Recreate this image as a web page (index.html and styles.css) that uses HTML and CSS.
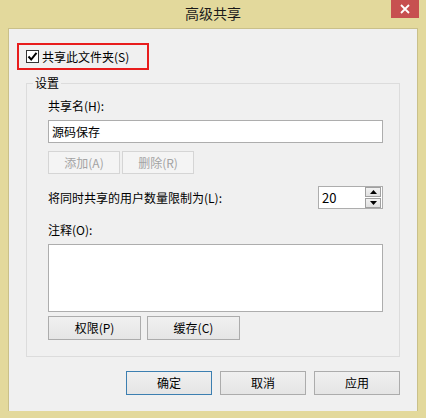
FILE: index.html
```html
<!DOCTYPE html>
<html>
<head>
    <title>高级共享</title>
    <meta charset="utf-8">
    <link rel="stylesheet" href="styles.css">
</head>
<body>
    <div class="window">
        <div class="titlebar">
            <span class="title">高级共享</span>
            <button class="close" aria-label="关闭">
                <svg width="10" height="10" viewBox="0 0 10 10"><path d="M1 1L9 9M9 1L1 9" stroke="#fff" stroke-width="1.8"/></svg>
            </button>
        </div>

        <div class="client">
            <label class="share-check">
                <span class="checkbox">
                    <svg width="11" height="11" viewBox="0 0 11 11"><path d="M1.5 5.5L4.2 8.5L9.5 1.8" fill="none" stroke="#000" stroke-width="2"/></svg>
                </span>
                共享此文件夹(S)
            </label>

            <fieldset class="group">
                <legend>设置</legend>

                <div class="label">共享名(H):</div>
                <div class="textbox">源码保存</div>

                <div class="btn-row small">
                    <button class="btn disabled">添加(A)</button>
                    <button class="btn disabled">删除(R)</button>
                </div>

                <div class="limit-row">
                    <span>将同时共享的用户数量限制为(L):</span>
                    <div class="spinner">
                        <span class="spin-value">20</span>
                        <div class="spin-btns">
                            <span class="spin-btn"><svg width="7" height="4" viewBox="0 0 7 4"><path d="M0 4L3.5 0L7 4Z" fill="#000"/></svg></span>
                            <span class="spin-btn"><svg width="7" height="4" viewBox="0 0 7 4"><path d="M0 0L7 0L3.5 4Z" fill="#000"/></svg></span>
                        </div>
                    </div>
                </div>

                <div class="label comment-label">注释(O):</div>
                <div class="textarea"></div>

                <div class="btn-row wide">
                    <button class="btn">权限(P)</button>
                    <button class="btn">缓存(C)</button>
                </div>
            </fieldset>

            <div class="footer">
                <button class="btn default">确定</button>
                <button class="btn">取消</button>
                <button class="btn">应用</button>
            </div>
        </div>
    </div>
</body>
</html>
```

FILE: styles.css
```css
body {
    margin: 0;
    font-family: "Noto Sans CJK SC", "Noto Sans", sans-serif;
    font-size: 12px;
    color: #000;
}
.window {
    width: 426px;
    height: 418px;
    background-color: #e3d99c;
    box-sizing: border-box;
    padding: 0 8px 7px 8px;
    display: flex;
    flex-direction: column;
}
.titlebar {
    height: 28px;
    position: relative;
    display: flex;
    justify-content: center;
    align-items: center;
}
.title {
    font-size: 14px;
    line-height: 16px;
    color: #1a1a1a;
    margin-top: -2px;
}
.close {
    position: absolute;
    top: 0;
    right: -1px;
    width: 28px;
    height: 18px;
    border: none;
    padding: 0;
    background-color: #c75050;
    display: flex;
    align-items: center;
    justify-content: center;
}
.client {
    flex: 1;
    background-color: #f0f0f0;
    border: 1px solid #c9c08a;
    border-bottom: none;
    box-sizing: border-box;
}
.share-check {
    display: inline-flex;
    align-items: center;
    gap: 3px;
    margin: 14px 0 0 8px;
    height: 27px;
    box-sizing: border-box;
    padding: 0 18px 0 7px;
    border: 2px solid #e81c1c;
    line-height: 16px;
}
.checkbox {
    width: 13px;
    height: 13px;
    box-sizing: border-box;
    border: 1px solid #333;
    background-color: #fff;
    display: flex;
    align-items: center;
    justify-content: center;
}
.group {
    margin: 5px 17px 0 17px;
    padding: 7px 16px 16px 21px;
    border: 1px solid #dcdcdc;
    line-height: 16px;
}
.group legend {
    padding: 0 2px;
    margin-left: -15px;
    line-height: 16px;
}
.textbox {
    margin-top: 6px;
    height: 23px;
    box-sizing: border-box;
    border: 1px solid #adadad;
    background-color: #fff;
    padding: 0 3px;
    line-height: 21px;
}
.btn-row {
    display: flex;
    gap: 2px;
}
.btn-row.small {
    margin-top: 8px;
}
.btn-row.wide {
    margin-top: 4px;
    gap: 6px;
}
.btn {
    font-family: inherit;
    font-size: 12px;
    color: #000;
    box-sizing: border-box;
    border: 1px solid #acacac;
    background: linear-gradient(#f0f0f0, #e5e5e5);
    padding: 0;
    margin: 0;
    line-height: 16px;
}
.btn-row.small .btn {
    width: 72px;
    height: 23px;
}
.btn-row.wide .btn {
    width: 93px;
    height: 24px;
}
.btn.disabled {
    color: #a3a3a3;
    border-color: #d5d5d5;
    background: #f4f4f4;
}
.limit-row {
    margin-top: 12px;
    display: flex;
    align-items: center;
    justify-content: space-between;
}
.spinner {
    width: 65px;
    height: 23px;
    box-sizing: border-box;
    border: 1px solid #adadad;
    background-color: #fff;
    display: flex;
    align-items: center;
    justify-content: space-between;
    padding: 0 1px 0 3px;
}
.spin-value {
    font-size: 13px;
}
.spin-btns {
    display: flex;
    flex-direction: column;
    gap: 1px;
}
.spin-btn {
    width: 16px;
    height: 10px;
    box-sizing: border-box;
    border: 1px solid #a0a0a0;
    background: linear-gradient(#f2f2f2, #e0e0e0);
    display: flex;
    align-items: center;
    justify-content: center;
}
.comment-label {
    margin-top: 13px;
}
.textarea {
    margin-top: 6px;
    height: 68px;
    box-sizing: border-box;
    border: 1px solid #adadad;
    background-color: #fff;
}
.footer {
    display: flex;
    justify-content: flex-end;
    gap: 8px;
    margin: 14px 17px 0 0;
}
.footer .btn {
    width: 86px;
    height: 24px;
}
.btn.default {
    border-color: #3c7fb1;
}
```
